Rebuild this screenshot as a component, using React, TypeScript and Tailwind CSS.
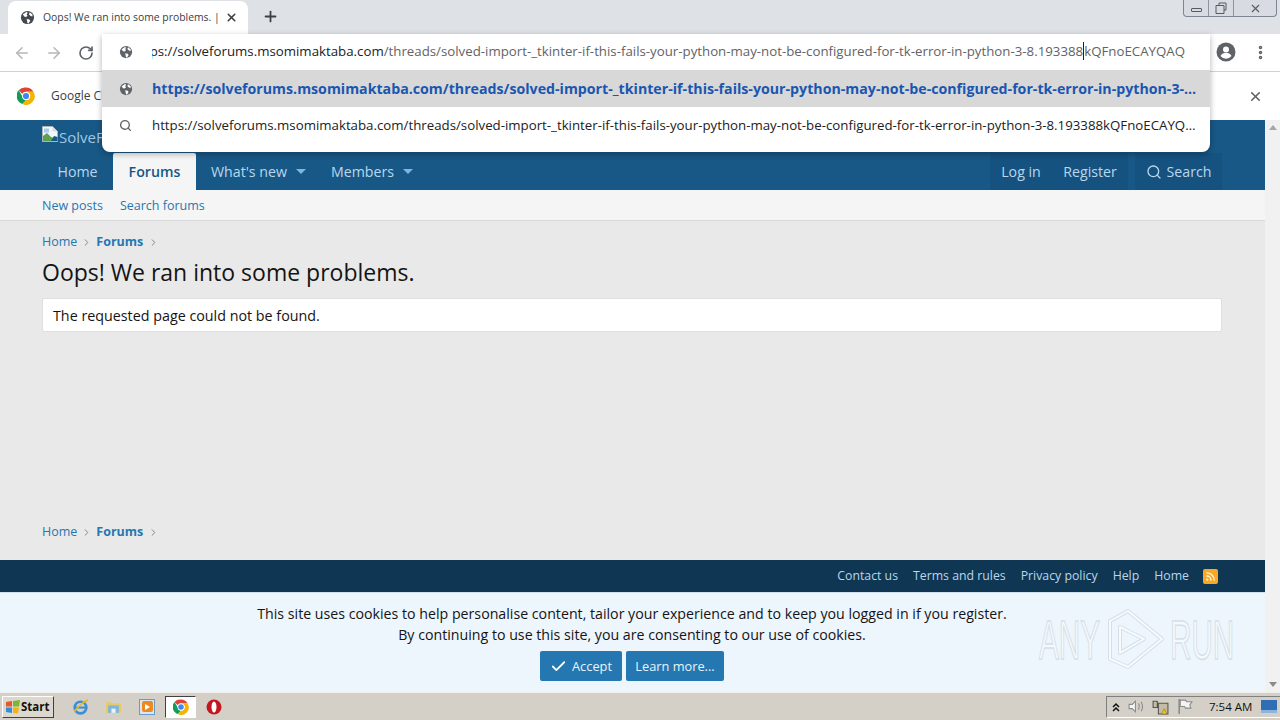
import React from "react";
import { ArrowLeft, ArrowRight, RotateCw, X, Plus, Search, EllipsisVertical, Check, Rss, ChevronRight } from "lucide-react";

const URL1 = "https://solveforums.msomimaktaba.com/threads/solved-import-_tkinter-if-this-fails-your-python-may-not-be-configured-for-tk-error-in-python-3-8.193388kQFnoECAYQAQ";

function Globe({ className = "", color = "#5f6368" }: { className?: string; color?: string }) {
  return (
    <svg viewBox="0 0 16 16" className={className}>
      <circle cx="8" cy="8" r="7" fill={color} />
      <path d="M3 4.500c1.500-.5 2.500-1 3.500-2.300L8.500 3 7 4.500 8 6 6.500 7.500 4.500 7ZM7 9.500l3 .5 1 1.500-2 3-1-.5-.5-2.500ZM10.500 2.500l3 2.500-.5 2-2-1-1.500-1.500Z" fill="#fff" />
    </svg>
  );
}

function ChromeLogo({ className = "" }: { className?: string }) {
  return (
    <svg viewBox="0 0 32 32" className={className}>
      <path d="M16 1a15 15 0 0 1 13 7.500H16a7.500 7.500 0 0 0-6.500 3.750L3 5.800A15 15 0 0 1 16 1Z" fill="#db4437" />
      <path d="M3 5.800l6.500 11.200a7.500 7.500 0 0 0 6.500 6.500L9.500 30A15 15 0 0 1 3 5.800Z" fill="#0f9d58" />
      <path d="M29 8.500A15 15 0 0 1 9.500 30L16 23.500a7.500 7.500 0 0 0 6.500-11.250L16 8.500Z" fill="#f4b400" />
      <circle cx="16" cy="16" r="7" fill="#fff" />
      <circle cx="16" cy="16" r="5.500" fill="#4285f4" />
    </svg>
  );
}

function BrokenImage() {
  return (
    <svg viewBox="0 0 16 16" className="w-[16px] h-[16px] mr-[1px] shrink-0">
      <path d="M.5.5h10l5 5v10H.5Z" fill="#f2f6fa" stroke="#a9b4bd" />
      <path d="M10.500.5v5h5Z" fill="#d5dde3" />
      <path d="M2 2.500h5v4H2Z" fill="#a9c8ea" />
      <path d="M1 15V10l4-3 4 4 3 1 3 3Z" fill="#5fa04a" />
      <path d="M9 15l3-5 3.500 1v4Z" fill="#185886" />
    </svg>
  );
}

function Caret() {
  return <span className="ml-[9px] h-0 w-0 border-x-[5px] border-t-[5px] border-x-transparent border-t-[#7fb6dd]" />;
}

function Crumbs() {
  return (
    <div className="flex items-center text-[12.500px] text-[#2577b1]">
      <span>Home</span>
      <ChevronRight size={11} className="mx-[4px] text-[#7f7f7f]" />
      <span className="font-bold">Forums</span>
      <ChevronRight size={11} className="ml-[5px] text-[#7f7f7f]" />
    </div>
  );
}

function Dropdown() {
  return (
    <div className="absolute left-[102px] top-[34px] w-[1108px] h-[118px] bg-white rounded-b-lg shadow-[0_2px_6px_rgba(0,0,0,0.3)] overflow-hidden text-[13.280px]">
      <div className="h-[36px] flex items-center text-[#5f6368]">
        <Globe className="ml-[17px] w-[14px] h-[14px] shrink-0" />
        <div className="ml-[19px] w-[1036px] overflow-hidden whitespace-nowrap flex justify-end pr-[3px]">
          <span className="shrink-0">
            <span className="text-[#202124]">ps://solveforums.msomimaktaba.com</span>/threads/solved-import-_tkinter-if-this-fails-your-python-may-not-be-configured-for-tk-error-in-python-3-8.193388<span className="border-l border-[#202124]">kQFnoECAYQAQ</span>
          </span>
        </div>
      </div>
      <div className="h-[37px] flex items-center bg-[#d8d8d8]">
        <Globe className="ml-[17px] w-[14px] h-[14px] shrink-0" />
        <div className="ml-[19px] w-[1047px] truncate font-bold text-[14.200px] text-[#1a56b0]">{URL1}</div>
      </div>
      <div className="h-[37px] flex items-center text-[#202124]">
        <Search size={13} strokeWidth={2.500} className="ml-[17px] shrink-0 text-[#5f6368]" />
        <div className="ml-[20px] w-[1048px] truncate">{URL1}</div>
      </div>
    </div>
  );
}

function Browser() {
  return (
    <>
      <div className="h-[34px] bg-[#dee1e6] flex items-end pl-2 relative">
        <div className="w-[240px] h-[33px] bg-white rounded-t-lg flex items-center pl-[12px]">
          <Globe className="w-[15px] h-[15px] shrink-0" color="#45494d" />
          <span className="ml-[8px] text-[10.400px] text-[#3c4043] whitespace-nowrap w-[170px]">Oops! We ran into some problems. |</span>
          <X size={13} strokeWidth={3} className="ml-[12px] text-[#3c4043]" />
        </div>
        <Plus size={17} strokeWidth={2.500} className="ml-[14px] mb-[9px] text-[#3c4043]" />
        <div className="absolute right-[3px] top-0 w-[94px] h-[17px] flex bg-[#d8dce2] border border-t-0 border-[#7c8590] rounded-b-[4px] text-[#545b63]">
          <div className="w-[25px] border-r border-[#8d949c] flex items-center justify-center"><div className="w-[11px] h-[4px] mt-[4px] border border-[#545b63] rounded-[1px]" /></div>
          <div className="w-[25px] border-r border-[#8d949c] flex items-center justify-center">
            <svg viewBox="0 0 12 12" className="w-[12px] h-[12px]"><path d="M4 3V1h7v7H9M1 3.500h8v8H1Z" fill="none" stroke="#545b63" /></svg>
          </div>
          <div className="flex-1 flex items-center justify-center"><X size={13} strokeWidth={2} /></div>
        </div>
      </div>
      <div className="h-[38px] bg-white border-b border-[#d0d2d5] flex items-center pl-[13px]">
        <ArrowLeft size={18} className="text-[#b4b6b9]" />
        <ArrowRight size={18} className="ml-[14px] text-[#b4b6b9]" />
        <RotateCw size={16} strokeWidth={2.500} className="ml-[15px] text-[#5f6368]" />
        <div className="ml-auto flex items-center pr-[11px]">
          <svg viewBox="0 0 20 20" className="w-[20px] h-[20px] -translate-x-[1px] -translate-y-[1px]">
            <circle cx="10" cy="10" r="9.500" fill="#5f6368" />
            <circle cx="10" cy="7.500" r="3" fill="#fff" />
            <path d="M4.500 14c1-2.500 3.500-3 5.500-3s4.500.5 5.500 3a7 7 0 0 1-11 0Z" fill="#fff" />
          </svg>
          <EllipsisVertical size={17} strokeWidth={3} className="ml-[15px] text-[#5f6368]" />
        </div>
      </div>
      <div className="h-[48px] bg-white flex items-center pl-[17px] pr-[17px]">
        <ChromeLogo className="w-[18px] h-[18px]" />
        <span className="ml-[16px] text-[12px] text-[#3c4043]">Google Chrome</span>
        <X size={15} strokeWidth={2.500} className="ml-auto text-[#5f6368]" />
      </div>
    </>
  );
}

function Forum() {
  return (
    <div className="flex-1 flex flex-col bg-[#e9e9e9] min-w-0 relative">
      <div className="h-[33px] bg-[#185886] pl-[42px] pt-[6px] flex items-start text-[15px] text-[#9fc7e4]">
        <BrokenImage />
        <span>SolveForums</span>
      </div>
      <div className="h-[37px] bg-[#185886] pl-[42px] pr-[43px] flex items-stretch text-[14.200px] text-[#b9d7ed]">
        <div className="w-[71px] flex items-center justify-center">Home</div>
        <div className="w-[83px] flex items-center justify-center bg-[#f5f5f5] rounded-t-[2px] font-semibold text-[#185886]">Forums</div>
        <div className="pl-[15px] w-[135px] flex items-center">What's new<Caret /></div>
        <div className="flex items-center">Members<Caret /></div>
        <div className="ml-auto flex items-stretch">
          <div className="w-[62px] bg-[#165280] flex items-center justify-center">Log in</div>
          <div className="w-[76px] bg-[#165280] flex items-center justify-center">Register</div>
          <div className="ml-[7px] w-[87px] bg-[#165280] flex items-center justify-center">
            <Search size={16} className="mr-[5px]" />Search
          </div>
        </div>
      </div>
      <div className="h-[31px] bg-[#f5f5f5] border-b border-[#d8d8d8] pl-[42px] pt-[2px] flex items-center gap-[17px] text-[12.500px] text-[#2577b1]">
        <span>New posts</span>
        <span>Search forums</span>
      </div>
      <div className="flex-1 flex flex-col pl-[42px] pr-[43px] pt-[12px]">
        <Crumbs />
        <h1 className="mt-[4px] text-[23px] leading-[32px] text-[#141414]">Oops! We ran into some problems.</h1>
        <div className="mt-[10px] h-[34px] bg-white border border-[#dfdfdf] rounded-[2px] pl-[10px] pt-[1px] flex items-center text-[14.300px] text-[#141414]">
          The requested page could not be found.
        </div>
        <div className="mt-auto mb-[18px]"><Crumbs /></div>
      </div>
      <div className="h-[32px] bg-[#0f3652] flex items-center justify-end pr-[47px] text-[12.300px] text-[#b9d7ed] gap-[15px]">
        <span>Contact us</span>
        <span>Terms and rules</span>
        <span>Privacy policy</span>
        <span>Help</span>
        <span>Home</span>
        <span className="w-[15px] h-[15px] rounded-[2px] bg-[#f9a825] flex items-center justify-center ml-[-1px]">
          <Rss size={11} strokeWidth={3} className="text-[#fff3d6]" />
        </span>
      </div>
      <div className="h-[100px] bg-[#edf6fd] border-t border-[#cfe2ee] flex flex-col items-center text-[14.200px] leading-[21px] text-[#141414] pt-[10px] pr-[1px]">
        <div>This site uses cookies to help personalise content, tailor your experience and to keep you logged in if you register.</div>
        <div>By continuing to use this site, you are consenting to our use of cookies.</div>
        <div className="mt-[6px] flex gap-[4px] text-[12.800px] text-[#e8f4fb]">
          <div className="w-[82px] h-[30px] rounded-[2px] bg-[#2577b1] flex items-center justify-center">
            <Check size={17} strokeWidth={2.500} className="mr-[5px] text-white" />Accept
          </div>
          <div className="w-[98px] h-[30px] rounded-[2px] bg-[#2577b1] flex items-center justify-center">Learn more...</div>
        </div>
      </div>
      <div className="absolute left-[1039px] top-[487px] w-[200px] h-[66px] flex items-center font-['Liberation_Sans',sans-serif] text-[56px] leading-none text-[#f5f9fd] [-webkit-text-stroke:1.500px_#d6dfe6]">
        <span className="inline-block w-[68px] origin-left scale-x-[0.53] whitespace-nowrap">ANY</span>
        <svg viewBox="0 0 60 66" className="w-[60px] h-[66px] shrink-0 -ml-[1px]">
          <path d="M4 14 22 4l34 28-34 28-18-8ZM14 20v26l24-14Z" fill="none" stroke="#d6dfe6" strokeWidth="4" strokeLinejoin="round" />
          <path d="M4 14 22 4l34 28-34 28-18-8ZM14 20v26l24-14Z" fill="none" stroke="#f8fbfe" strokeWidth="2" strokeLinejoin="round" />
        </svg>
        <span className="inline-block w-[66px] ml-[4px] origin-left scale-x-[0.53] whitespace-nowrap">RUN</span>
      </div>
    </div>
  );
}

function Scrollbar() {
  return (
    <div className="w-[15px] bg-[#f1f1f1] flex flex-col items-center justify-between py-[5px]">
      <div className="h-0 w-0 border-x-[4px] border-b-[5px] border-x-transparent border-b-[#a6a6a6]" />
      <div className="h-0 w-0 border-x-[4px] border-t-[5px] border-x-transparent border-t-[#8a8a8a]" />
    </div>
  );
}

function Taskbar() {
  return (
    <div className="h-[28px] bg-[#d4d0c8] border-t border-[#f0eeea] flex items-center text-[#111]">
      <div className="ml-[2px] w-[52px] h-[22px] bg-[#dcd8d0] border border-t-white border-l-white border-r-[#404040] border-b-[#404040] flex items-center pl-[2px] text-[11.500px] font-bold">
        <svg viewBox="0 0 16 16" className="w-[16px] h-[16px] shrink-0">
          <path d="M1 3l6-1v5.500H1Z" fill="#e8562a" /><path d="M8 2l7-1-1 6.500H8Z" fill="#7cb82f" /><path d="M1 8.500h6V14l-6-1Z" fill="#2f8fdc" /><path d="M8 8.500h6l-1 6L8 14Z" fill="#f6b21a" />
        </svg>
        <span>Start</span>
      </div>
      <svg viewBox="0 0 16 16" className="ml-[18px] w-[17px] h-[17px]">
        <circle cx="8" cy="9" r="5.500" fill="none" stroke="#3c8fd6" strokeWidth="2.500" /><path d="M3 9h10" stroke="#3c8fd6" strokeWidth="2" /><path d="M2 13C6 8 11 3 15 2" fill="none" stroke="#e5b92c" strokeWidth="1.500" />
      </svg>
      <svg viewBox="0 0 16 16" className="ml-[16px] w-[17px] h-[17px]">
        <path d="M1 4h5l1 1h8v9H1Z" fill="#e8c96a" /><path d="M3 7h10v7H3Z" fill="#7cb6d8" /><path d="M6 10h4v4H6Z" fill="#e9f2f7" />
      </svg>
      <div className="ml-[17px] w-[16px] h-[16px] border border-[#6b9bc8] bg-[#d7e6f2] flex items-center justify-center">
        <div className="w-[11px] h-[11px] bg-[#ec8a21] rounded-[2px] flex items-center justify-center">
          <div className="h-0 w-0 border-y-[3px] border-l-[5px] border-y-transparent border-l-white" />
        </div>
      </div>
      <div className="ml-[10px] w-[31px] h-[22px] bg-white border border-t-[#404040] border-l-[#404040] border-r-white border-b-white flex items-center justify-center">
        <ChromeLogo className="w-[16px] h-[16px]" />
      </div>
      <svg viewBox="0 0 16 16" className="ml-[10px] w-[16px] h-[16px]">
        <circle cx="8" cy="8" r="7.500" fill="#c4161c" /><ellipse cx="8" cy="8" rx="2.500" ry="5.500" fill="#fff" />
      </svg>
      <div className="ml-auto w-[174px] h-[22px] border-l border-t border-[#808080] border-b-white border-b flex items-center text-[11.500px]">
        <svg viewBox="0 0 10 10" className="ml-[4px] w-[10px] h-[10px]"><path d="M2 5l3-3 3 3M2 9l3-3 3 3" fill="none" stroke="#111" strokeWidth="1.500" /></svg>
        <svg viewBox="0 0 16 16" className="ml-[7px] w-[17px] h-[17px]"><path d="M1 6h3l3-3v10l-3-3H1Z" fill="#f4f4f4" stroke="#8b8b8b" /><path d="M10 5c1 2 1 4 0 6M12.500 3.500c1.500 3 1.500 6 0 9" fill="none" stroke="#8b8b8b" /></svg>
        <svg viewBox="0 0 16 16" className="ml-[7px] w-[17px] h-[17px]"><path d="M1 3h4v6H1Z M6 5h9v10H6Z" fill="#c4bca4" stroke="#555" /><path d="M9 15l2.500-5 2.500 5Z" fill="#f5c518" stroke="#8a6d00" strokeWidth=".5" /></svg>
        <svg viewBox="0 0 16 16" className="ml-[7px] w-[17px] h-[17px]"><path d="M3 1v14" stroke="#8b8b8b" strokeWidth="1.500" /><path d="M4 2h5l1 1.500h5l-2 3 1 3H9l-1-1.500H4Z" fill="#f4f4f4" stroke="#8b8b8b" /></svg>
        <span className="ml-[16px] whitespace-nowrap">7:54 AM</span>
        <div className="ml-auto mr-[3px] w-[16px] h-[13px] bg-[#2f6db5] border-b-[3px] border-[#8bb4de]" />
      </div>
    </div>
  );
}

export default function App() {
  return (
    <div className="relative w-[1280px] h-[720px] overflow-hidden flex flex-col bg-white font-['Open_Sans','Noto_Sans',sans-serif]">
      <Browser />
      <div className="h-[572px] flex min-h-0">
        <Forum />
        <Scrollbar />
      </div>
      <Taskbar />
      <Dropdown />
    </div>
  );
}
